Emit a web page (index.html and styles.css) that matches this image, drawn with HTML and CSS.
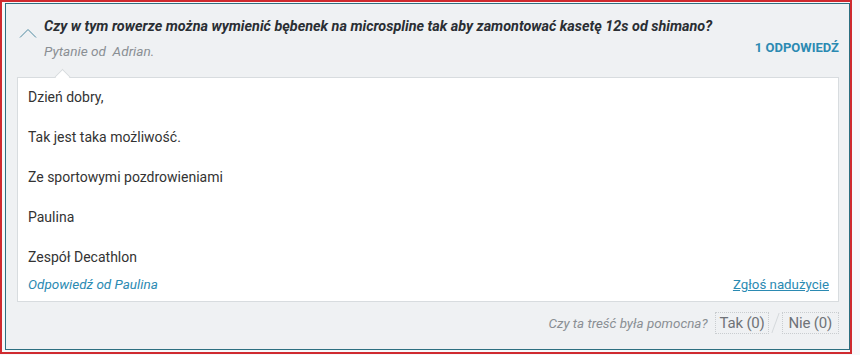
FILE: index.html
```html
<!DOCTYPE html>
<html lang="pl">
<head>
<meta charset="utf-8">
<link rel="stylesheet" href="styles.css">
</head>
<body>
<div class="frame">
  <div class="qa">
    <div class="q-head">
      <svg class="chev" width="18" height="10" viewBox="0 0 18 10"><path d="M1 9.5 L9 1.5 L17 9.5" fill="none" stroke="#4f8aa0" stroke-width="1"/></svg>
      <div class="q-main">
        <div class="q-title">Czy w tym rowerze można wymienić bębenek na microspline tak aby zamontować kasetę 12s od shimano?</div>
        <div class="q-meta">
          <span class="q-author">Pytanie od&nbsp; Adrian.</span>
          <span class="q-count">1 ODPOWIEDŹ</span>
        </div>
      </div>
    </div>
    <div class="answer">
      <p>Dzień dobry,</p>
      <p>Tak jest taka możliwość.</p>
      <p>Ze sportowymi pozdrowieniami</p>
      <p>Paulina</p>
      <p>Zespół Decathlon</p>
      <div class="a-foot">
        <span class="a-author">Odpowiedź od Paulina</span>
        <a class="report" href="#">Zgłoś nadużycie</a>
      </div>
    </div>
    <div class="helpful">
      <span class="h-label">Czy ta treść była pomocna?</span>
      <span class="vote vote-yes">Tak (0)</span>
      <span class="sep"></span>
      <span class="vote vote-no">Nie (0)</span>
    </div>
  </div>
</div>
</body>
</html>
```

FILE: styles.css
```css
html, body {
  margin: 0;
  padding: 0;
  background: #f7f8fa;
}
body {
  width: 860px;
  height: 355px;
  font-family: Roboto, "Noto Sans", sans-serif;
  color: #333;
}
.frame {
  box-sizing: border-box;
  width: 852px;
  height: 354px;
  border: 2px solid #cf2a2f;
  padding: 1px 0 2px 3px;
  background: #f7f8fa;
}
.qa {
  box-sizing: border-box;
  height: 100%;
  border: 1px solid #2d6f80;
  background: #eff1f3;
  padding: 13px 10px 0 11px;
}
.q-head {
  display: flex;
  align-items: flex-start;
}
.chev {
  margin: 11px 0 0 2px;
  flex: none;
}
.q-main {
  flex: 1;
  margin-left: 7px;
}
.q-title {
  font-weight: 700;
  font-style: italic;
  font-size: 14.4px;
  line-height: 20px;
  color: #2a2e33;
}
.q-meta {
  display: flex;
  justify-content: space-between;
  align-items: baseline;
  margin-top: 6px;
}
.q-author {
  font-style: italic;
  font-size: 13.6px;
  color: #8a8f94;
}
.q-count {
  font-weight: 700;
  font-size: 13px;
  color: #2b8ab2;
  position: relative;
  top: -4px;
}
.answer {
  position: relative;
  margin-top: 18px;
  background: #fff;
  border: 1px solid #d8dcdf;
  padding: 9px 9px 6px 10px;
  font-size: 14px;
  line-height: 20px;
}
.answer::before {
  content: "";
  position: absolute;
  top: -7px;
  left: 39px;
  width: 10px;
  height: 10px;
  background: #fff;
  border-top: 1px solid #d8dcdf;
  border-left: 1px solid #d8dcdf;
  transform: rotate(45deg);
}
.answer p {
  margin: 0 0 20px;
}
.answer p:last-of-type {
  margin-bottom: 7px;
}
.a-foot {
  display: flex;
  justify-content: space-between;
  align-items: baseline;
  font-size: 13.5px;
}
.a-author {
  font-style: italic;
  color: #2b8ab2;
}
.report {
  color: #2b8ab2;
  text-decoration: underline;
  font-size: 13.3px;
}
.helpful {
  display: flex;
  justify-content: flex-end;
  align-items: center;
  margin-top: 10px;
}
.h-label {
  font-style: italic;
  font-size: 13.4px;
  color: #8a8f94;
  margin-right: 7px;
}
.vote {
  font-size: 15px;
  letter-spacing: -0.2px;
  color: #6f7378;
  border: 1px dotted #c9cdd0;
  line-height: 20px;
}
.vote-yes {
  padding: 0 3px 0 4px;
}
.vote-no {
  padding: 0 6px;
}
.sep {
  width: 1px;
  height: 20px;
  background: #d5d9dc;
  transform: skewX(-20deg);
  margin: 0 6px;
}
```
